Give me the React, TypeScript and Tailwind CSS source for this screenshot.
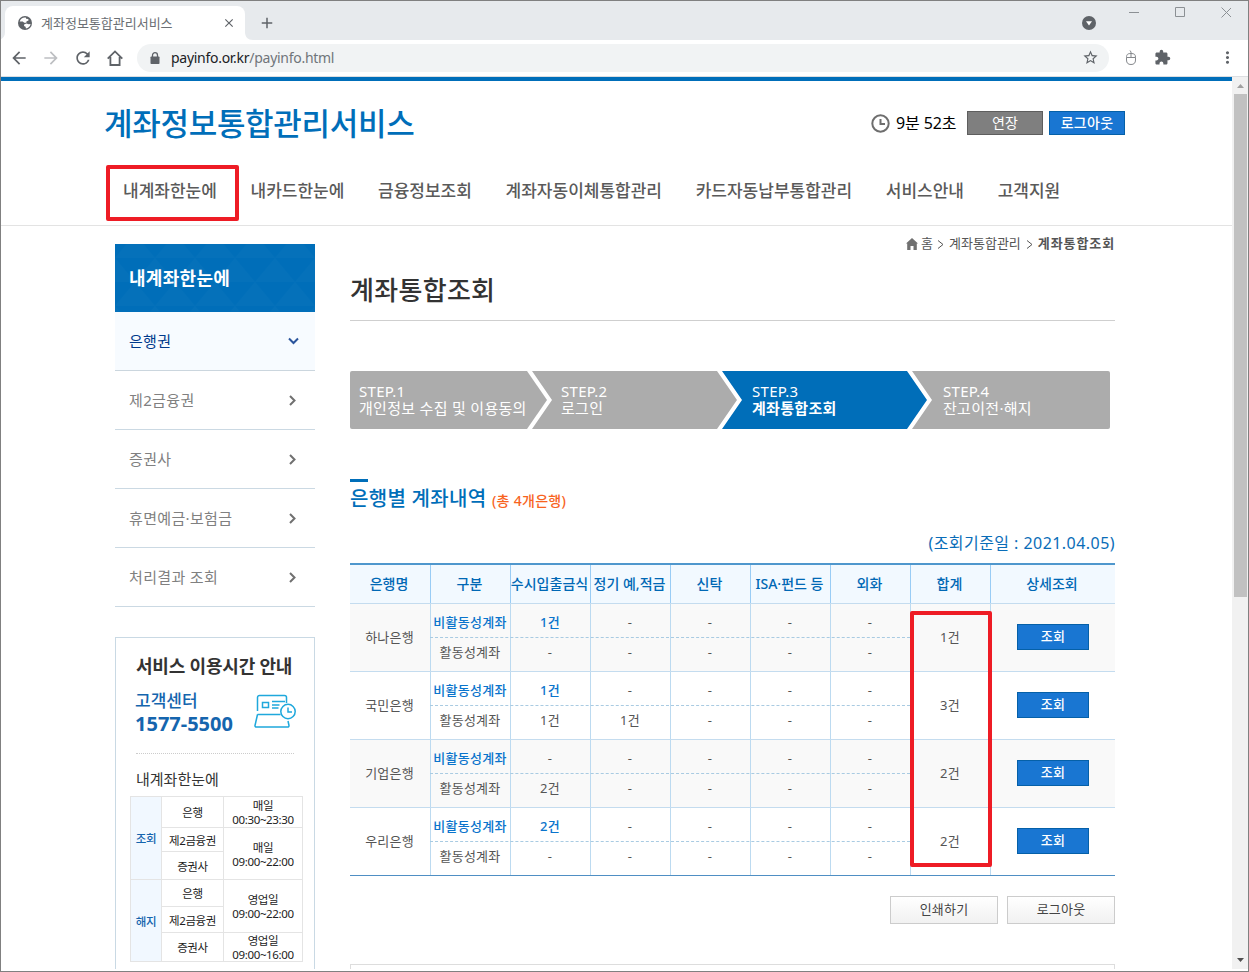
import React from 'react';
import {
    MdAdd,
    MdArrowBack,
    MdArrowForward,
    MdClose,
    MdExtension,
    MdMoreVert,
    MdRefresh,
    MdStarBorder,
} from 'react-icons/md';
import clsx from 'clsx';

interface BankRow {
    name: string;
    inactive: string[];
    active: string[];
    total: string;
}

const NAV = ['내계좌한눈에', '내카드한눈에', '금융정보조회', '계좌자동이체통합관리', '카드자동납부통합관리', '서비스안내', '고객지원'];

const SIDE_MENU = ['제2금융권', '증권사', '휴면예금·보험금', '처리결과 조회'];

const COLUMNS = ['은행명', '구분', '수시입출금식', '정기 예,적금', '신탁', 'ISA·펀드 등', '외화', '합계', '상세조회'];

const BANKS: BankRow[] = [
    { name: '하나은행', inactive: ['1건', '-', '-', '-', '-'], active: ['-', '-', '-', '-', '-'], total: '1건' },
    { name: '국민은행', inactive: ['1건', '-', '-', '-', '-'], active: ['1건', '1건', '-', '-', '-'], total: '3건' },
    { name: '기업은행', inactive: ['-', '-', '-', '-', '-'], active: ['2건', '-', '-', '-', '-'], total: '2건' },
    { name: '우리은행', inactive: ['2건', '-', '-', '-', '-'], active: ['-', '-', '-', '-', '-'], total: '2건' },
];

const BrowserChrome = () => (
    <div className="shrink-0">
        {/* Tab strip */}
        <div className="flex h-[39px] justify-between bg-[#e7eaed]">
            <div className="flex pt-[5px] pl-1">
                <div className="relative flex h-[34px] w-[240px] items-center rounded-t-lg bg-white pr-[9px] pl-[13px]">
                    <svg className="size-[14px]" viewBox="0 0 14 14">
                        <circle cx="7" cy="7" r="7" fill="#5f6368" />
                        <path d="M7.800 1.600C5 1.200 2.500 3 1.700 5.400l3 .1 1.600 1.300 2-.1.3-1.400 1.900-.8-.2-1.400-2.200-.4zM6.300 8.200l2.300-.8 2 .9 2-.3c-.4 2.300-2.300 4.300-4.700 4.500l-.3-1.800-1.600-.8z" fill="#fff" />
                    </svg>
                    <span className="ml-[9px] flex-1 text-[13px] leading-5 text-[#6b6f74]">계좌정보통합관리서비스</span>
                    <MdClose className="size-3.5 text-[#5f6368]" />
                    <svg className="absolute bottom-0 -left-1 h-2 w-1" viewBox="4 0 4 8">
                        <path d="M8 0v8H0c5 0 8-3 8-8z" fill="#fff" />
                    </svg>
                    <svg className="absolute -right-2 bottom-0 size-2" viewBox="0 0 8 8">
                        <path d="M0 0v8h8C3 8 0 5 0 0z" fill="#fff" />
                    </svg>
                </div>
                <MdAdd className="mt-2 ml-[13px] size-[18px] text-[#5f6368]" />
            </div>
            <div className="flex">
                <svg className="mt-[15px] mr-[29px] size-3.5" viewBox="0 0 14 14">
                    <circle cx="7" cy="7" r="7" fill="#5f6368" />
                    <path d="M4 5.200h6L7 9.600z" fill="#fff" />
                </svg>
                <svg className="mt-1.5 mr-[17px] h-3 w-[106px]" viewBox="0 0 106 12" fill="none" stroke="#8c9094">
                    <path d="M4 5.500h10M50.500.500h9v9h-9zM96.500.500l10 10m0-10l-10 10" />
                </svg>
            </div>
        </div>

        {/* Toolbar */}
        <div className="flex h-[37px] items-center border-b border-[#dcdee1] bg-white pb-px pl-2">
            <MdArrowBack className="size-5 text-[#5f6368]" />
            <MdArrowForward className="ml-3 size-5 text-[#bdbfc2]" />
            <MdRefresh className="ml-3 size-5 text-[#5f6368]" />
            <svg className="ml-3.5 size-4" viewBox="0 0 16 16" fill="none" stroke="#5f6368" strokeWidth="1.800">
                <path d="M.7 8.700L8 1.400l7.300 7.300M3.400 7v8h9.200V7" />
            </svg>
            <div className="ml-3.5 flex h-7 w-[972px] items-center rounded-full bg-[#f1f3f4] pr-2.5 pl-[13px]">
                <svg className="h-3 w-2.5" viewBox="0 0 10 12">
                    <path d="M2.500 5V3.200a2.500 2.500 0 0 1 5 0V5" fill="none" stroke="#5f6368" strokeWidth="1.300" />
                    <rect x=".5" y="4.500" width="9" height="7.500" rx=".8" fill="#5f6368" />
                </svg>
                <span className="ml-[11px] flex-1 text-[14px] leading-5 tracking-[-0.28px] text-[#202124]">
                    payinfo.or.kr<span className="text-[#70757a]">/payinfo.html</span>
                </span>
                <MdStarBorder className="size-[17px] text-[#5f6368]" />
            </div>
            <svg className="ml-4 h-4 w-3" viewBox="0 0 12 16" fill="none" stroke="#85888c">
                <path d="M1.500 7.500c0-3 1-4 4.500-4s4.500 1 4.500 4v2.500c0 3-1.500 4.500-4.500 4.500S1.500 13 1.500 10zM1.500 7.500h9M6 7.500V2l-1-1.500" />
            </svg>
            <MdExtension className="ml-[17px] size-[17px] text-[#5f6368]" />
            <MdMoreVert className="ml-[47px] size-[19px] text-[#5f6368]" />
        </div>
    </div>
);

const Header = () => (
    <header className="h-[149px] shrink-0 border-t-4 border-b border-t-[#006eb9] border-b-[#e3e3e3]">
        <div className="flex h-[84px] items-center justify-between pr-[107px] pl-[103px]">
            <h1 className="text-[31px] leading-10 font-medium tracking-[-0.3px] text-[#006eb9]">계좌정보통합관리서비스</h1>
            <div className="flex items-center">
                <svg className="size-[19px]" viewBox="0 0 19 19" fill="none" stroke="#6e6e6e" strokeWidth="2">
                    <circle cx="9.500" cy="9.500" r="8.200" />
                    <path d="M9.500 5v5h4.500" />
                </svg>
                <span className="ml-1.5 w-[71px] text-[16px] leading-6 tracking-[-0.1px] text-black">9분 52초</span>
                <button className="h-6 w-[76px] border border-[#5e5e5e] bg-[#7f7f7f] text-[14px] leading-5 text-white">연장</button>
                <button className="ml-1.5 h-6 w-[76px] border border-[#0560a8] bg-[#1976d2] text-[14px] leading-5 font-medium tracking-[0.3px] text-white">
                    로그아웃
                </button>
            </div>
        </div>
        <nav className="relative flex h-[50px] items-center gap-[33.7px] pt-0.5 pl-[122px] text-[17px] leading-6 font-medium text-[#5a5a5a]">
            {NAV.map((item) => (
                <span key={item}>{item}</span>
            ))}
            <div className="absolute top-0 left-[105px] h-14 w-[133px] rounded-[2px] border-4 border-[#ee1c25]" />
        </nav>
    </header>
);

const Sidebar = () => (
    <aside className="w-[200px] shrink-0">
        <div className="relative h-[68px] bg-[#006eb9]">
            <svg className="absolute inset-0 h-full w-full">
                <defs>
                    <pattern id="tri" width="40" height="48" patternUnits="userSpaceOnUse" y="-10">
                        <path d="M0 24L20 0l20 24z" fill="#fff" fillOpacity=".02" />
                        <path d="M-20 48L0 24l20 24zM20 48l20-24 20 24z" fill="#fff" fillOpacity=".02" />
                    </pattern>
                </defs>
                <rect width="100%" height="100%" fill="url(#tri)" />
            </svg>
            <h2 className="relative pl-3.5 text-[18px] leading-[68px] font-bold tracking-[0.3px] text-white">내계좌한눈에</h2>
        </div>
        <div className="flex h-[59px] items-center justify-between border-b border-[#cbd6de] bg-[#f7fbff] pr-4 pl-3.5 text-[15px] tracking-[0.3px] text-[#003a8c]">
            은행권
            <svg className="h-[8px] w-[11px]" viewBox="0 0 11 8" fill="none" stroke="#2a549c" strokeWidth="2">
                <path d="M1 1.500L5.500 6 10 1.500" />
            </svg>
        </div>
        {SIDE_MENU.map((item) => (
            <div
                key={item}
                className="flex h-[59px] items-center justify-between border-b border-[#cbd9e3] pr-[18px] pl-3.5 text-[15px] tracking-[0.35px] text-[#808080]"
            >
                {item}
                <svg className="h-[11px] w-2" viewBox="0 0 8 11" fill="none" stroke="#707070" strokeWidth="2">
                    <path d="M1 1l4.500 4.500L1 10" />
                </svg>
            </div>
        ))}
        <ServiceHours />
    </aside>
);

const ServiceHours = () => (
    <div className="mt-[30px] h-[340px] border border-[#c9d9e4] px-3.5 pt-4">
        <div className="pl-1.5">
            <h3 className="text-[18px] leading-6 font-bold tracking-[-0.2px] whitespace-nowrap text-[#333]">서비스 이용시간 안내</h3>
            <div className="mt-3 flex h-[46px] justify-between">
                <div className="-ml-px text-[#1565ae]">
                    <p className="text-[17px] leading-[22px] font-medium">고객센터</p>
                    <p className="text-[20px] leading-6 font-bold">1577-5500</p>
                </div>
                <svg className="mt-[4px] mr-1 h-[34px] w-[42px]" viewBox="0 0 42 34" fill="none" stroke="#1fa8dc" strokeWidth="1.500">
                    <path d="M3.500 17V3.500a2 2 0 0 1 2-2h25a2 2 0 0 1 2 2V9M3.500 20.500h23M3.500 20.500L1 31.500c-.2 1 .5 1.500 1.500 1.500h31c1 0 1.700-.5 1.500-1.500L34 27" />
                    <path d="M8.500 8.500h6v5h-6zM18 7.500h13M18 11h7.500M18 14h6.500" />
                    <circle cx="34" cy="17.500" r="7.200" />
                    <path d="M34 13.500v4.500h4" />
                </svg>
            </div>
            <div className="mt-[17px] mr-1.5 border-b border-dotted border-[#ccc]" />
            <p className="mt-[13px] mb-px text-[15px] leading-6 text-[#333]">내계좌한눈에</p>
        </div>
        {/* Opening hours */}
        <div className="mt-[5px] grid w-[173px] grid-cols-[30px_61px_78px] grid-rows-[30px_23px_27px_26px_25px_28px] gap-px bg-[#e4e4e4] p-px text-center text-[11.5px] leading-[14px] tracking-[-0.35px] text-[#222] *:flex *:items-center *:justify-center *:bg-white *:pt-0.5">
            <div className="row-span-3 bg-[#f1f8ff]! font-medium text-[#1565ae]">조회</div>
            <div>은행</div>
            <div>매일<br />00:30~23:30</div>
            <div>제2금융권</div>
            <div className="row-span-2">매일<br />09:00~22:00</div>
            <div>증권사</div>
            <div className="row-span-3 bg-[#f1f8ff]! font-medium text-[#1565ae]">해지</div>
            <div>은행</div>
            <div className="row-span-2">영업일<br />09:00~22:00</div>
            <div>제2금융권</div>
            <div>증권사</div>
            <div>영업일<br />09:00~16:00</div>
        </div>
    </div>
);

const Breadcrumb = () => (
    <div className="-mt-3 flex h-6 items-center justify-end text-[13px] text-[#555]">
        <svg className="mr-[3px] size-3" viewBox="0 0 12 12" fill="#707070">
            <path d="M6 0l6 5.500h-1.200V12H7.500V8h-3v4H1.200V5.500H0z" />
        </svg>
        <span>홈</span>
        <svg className="mr-[5px] ml-1 h-[9px] w-[7px]" viewBox="0 0 7 9" fill="none" stroke="#555">
            <path d="M1 .5l5 4-5 4" />
        </svg>
        <span>계좌통합관리</span>
        <svg className="mx-[5px] h-[9px] w-[7px]" viewBox="0 0 7 9" fill="none" stroke="#555">
            <path d="M1 .5l5 4-5 4" />
        </svg>
        <b className="tracking-[0.9px]">계좌통합조회</b>
    </div>
);

const Steps = () => (
    <div className="mt-[50px] flex h-[58px] w-[760px] text-[15px] leading-[17px] tracking-[0.3px] whitespace-nowrap text-white *:h-full *:pt-3">
        <div className="w-[197px] rounded-l-[2px] bg-[#acacac] pl-[9px] [clip-path:polygon(0_0,177px_0,100%_50%,177px_100%,0_100%)]">
            STEP.1<br />개인정보 수집 및 이용동의
        </div>
        <div className="-ml-[15px] w-[205px] bg-[#acacac] pl-[29px] [clip-path:polygon(0_0,185px_0,100%_50%,185px_100%,0_100%,20px_50%)]">
            STEP.2<br />로그인
        </div>
        <div className="-ml-[15px] w-[205px] bg-[#006eb9] pl-[30px] [clip-path:polygon(0_0,185px_0,100%_50%,185px_100%,0_100%,20px_50%)]">
            STEP.3<br /><b>계좌통합조회</b>
        </div>
        <div className="-ml-[15px] w-[198px] rounded-r-[2px] bg-[#acacac] pl-[31px] [clip-path:polygon(0_0,100%_0,100%_100%,0_100%,20px_50%)]">
            STEP.4<br />잔고이전·해지
        </div>
    </div>
);

const CountRow = ({ label, values, highlight }: { label: string; values: string[]; highlight?: boolean }) => (
    <div
        className={clsx(
            'grid grid-cols-6 text-center leading-[29px]',
            highlight ? 'h-[34px] border-b border-dashed border-[#a9cbe2] pt-1' : 'h-[33px]'
        )}
    >
        {[label, ...values].map((value, index) => (
            <span key={index} className={clsx(highlight && value !== '-' && 'font-medium tracking-[0.3px] text-[#0a74cc]')}>
                {value}
            </span>
        ))}
    </div>
);

const AccountTable = () => (
    <div className="relative border-t-2 border-b border-t-[#4f97cd] border-b-[#4f8fc4]">
        <div className="grid h-[39px] grid-cols-[80px_repeat(7,80px)_125px] border-b border-[#c4dcef] bg-[#f2f9ff] text-center text-[14px] leading-[38px] font-medium whitespace-nowrap text-[#0068b5]">
            {COLUMNS.map((column, index) => (
                <div key={column} className={clsx('flex justify-center pr-0.5', index > 0 && 'border-l border-[#99ccf5]')}>
                    {column}
                </div>
            ))}
        </div>
        {BANKS.map((bank, index) => (
            <div
                key={bank.name}
                className={clsx(
                    'grid grid-cols-[80px_480px_80px_125px] text-[13px] tracking-[0.2px] text-[#555]',
                    index % 2 === 0 && 'bg-[#f9f9f9]',
                    index < BANKS.length - 1 ? 'h-[68px] border-b border-[#c4dcef]' : 'h-[67px]'
                )}
            >
                <div className="pr-px text-center leading-[66px]">{bank.name}</div>
                {/* Vertical rules of the six account columns */}
                <div className="bg-[repeating-linear-gradient(to_right,#bcdaf0_0_1px,transparent_1px_80px)]">
                    <CountRow label="비활동성계좌" values={bank.inactive} highlight />
                    <CountRow label="활동성계좌" values={bank.active} />
                </div>
                <div className="border-l border-[#bcdaf0] pr-px text-center leading-[66px]">{bank.total}</div>
                <div className="flex items-center justify-center border-l border-[#bcdaf0] pb-0.5">
                    <button className="h-[26px] w-[72px] border border-[#0560a8] bg-[#1976d2] text-[13px] font-medium text-white">조회</button>
                </div>
            </div>
        ))}
        <div className="absolute top-[46px] left-[560px] h-64 w-[82px] rounded-[2px] border-4 border-[#ee1c25]" />
    </div>
);

const Content = () => (
    <main className="ml-[35px] w-[765px] shrink-0">
        <Breadcrumb />
        <h2 className="mt-3.5 h-[51px] border-b border-[#cfcfcf] text-[26px] leading-10 font-medium tracking-[0.3px] text-[#333]">계좌통합조회</h2>
        <Steps />
        <div className="mt-[50px] h-[3px] w-[18px] bg-[#006eb9]" />
        <h3 className="mt-[3px] text-[20px] leading-7 font-medium tracking-[0.3px] text-[#006eb9]">
            은행별 계좌내역 <span className="text-[14px] text-[#f8641f]">(총 4개은행)</span>
        </h3>
        <p className="mt-4 mb-2 text-right text-[16px] leading-6 tracking-[0.45px] text-[#0a6db8]">(조회기준일 : 2021.04.05)</p>
        <AccountTable />
        <div className="mt-5 flex justify-end gap-[9px] text-[13px] tracking-[0.2px] text-[#444]">
            <button className="h-7 w-[108px] border border-[#ccc] bg-linear-to-b from-white to-[#f1f1f1]">인쇄하기</button>
            <button className="h-7 w-[108px] border border-[#ccc] bg-linear-to-b from-white to-[#f1f1f1]">로그아웃</button>
        </div>
        <div className="mt-10 h-10 border border-[#ddd]" />
    </main>
);

const Scrollbar = () => (
    <div className="flex w-4 shrink-0 flex-col items-center bg-[#f1f1f1]">
        <svg className="mt-[7px] h-1 w-[7px]" viewBox="0 0 7 4">
            <path d="M3.500 0L7 4H0z" fill="#a0a0a0" />
        </svg>
        <div className="mt-[6px] h-[503px] w-[13px] bg-[#c1c1c1]" />
        <div className="flex-1" />
        <svg className="mb-[7px] h-1 w-[7px]" viewBox="0 0 7 4">
            <path d="M3.500 4L7 0H0z" fill="#505050" />
        </svg>
    </div>
);

const App: React.FC = () => {
    return (
        <div className="flex h-[972px] w-[1249px] flex-col overflow-hidden border border-[#808080] bg-white pb-0.5 font-['Noto_Sans','Noto_Sans_CJK_KR',sans-serif]">
            <BrowserChrome />
            <div className="flex min-h-0 flex-1">
                <div className="flex flex-1 flex-col overflow-hidden">
                    <Header />
                    <div className="flex min-h-0 flex-1 pt-[18px] pl-[114px]">
                        <Sidebar />
                        <Content />
                    </div>
                </div>
                <Scrollbar />
            </div>
        </div>
    );
};

export default App;
